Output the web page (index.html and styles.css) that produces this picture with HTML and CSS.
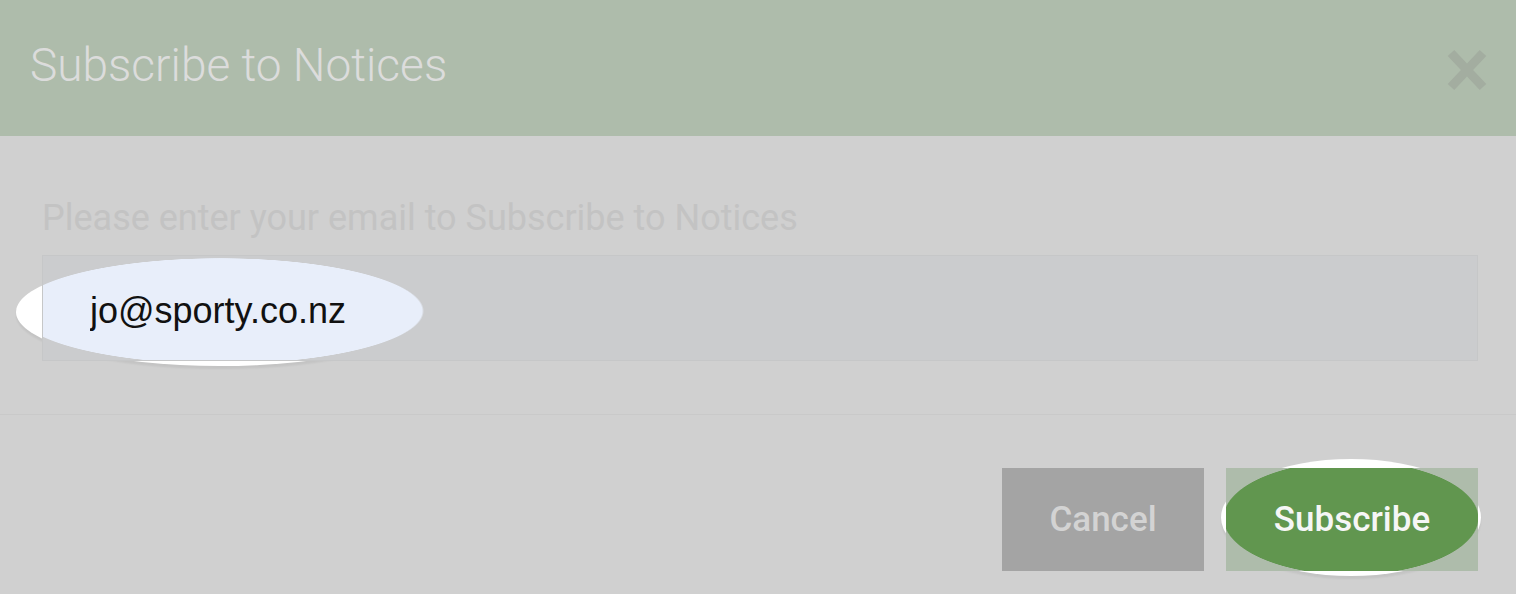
FILE: index.html
```html
<!DOCTYPE html>
<html lang="en">

<head>
    <meta charset="UTF-8">
    <title>Subscribe to Notices</title>
    <link rel="stylesheet" href="styles.css">
</head>

<body>
    <div class="modal">
        <div class="modal-head">
            <h2 class="modal-title">Subscribe to Notices</h2>
            <button class="close" type="button" aria-label="Close">
                <svg width="42" height="44" viewBox="0 0 42 44">
                    <path d="M5 5 L37 39 M37 5 L5 39" stroke="#a3ada0" stroke-width="9" fill="none"/>
                </svg>
            </button>
        </div>

        <div class="modal-body">
            <label class="lbl" for="email">Please enter your email to Subscribe to Notices</label>
            <div class="field">
                <span class="spot spot-field"></span>
                <input class="email" id="email" type="text" value="jo@sporty.co.nz">
            </div>
        </div>

        <div class="modal-foot">
            <button class="btn btn-cancel" type="button">Cancel</button>
            <div class="btn-wrap">
                <span class="spot spot-btn"></span>
                <button class="btn btn-sub" type="button">Subscribe</button>
            </div>
        </div>
    </div>
</body>

</html>
```

FILE: styles.css
```css
/* 기본 */
body {
    margin: 0;
    background: #d0d0d0;
    font-family: Roboto, "Liberation Sans", sans-serif;
}

/* 모달 전체 */
.modal {
    background: #d0d0d0;
    height: 594px;
    overflow: hidden;
}

/* 헤더 */
.modal-head {
    height: 136px;
    background: #aebcab;
    display: flex;
    align-items: center;
    justify-content: space-between;
    padding: 0 28px 0 30px;
    box-sizing: border-box;
}

.modal-title {
    margin: 0;
    font-size: 46px;
    font-weight: 300;
    color: #dcdcdc;
    padding-bottom: 6px;
}

.close {
    border: 0;
    background: none;
    padding: 0;
    margin-top: 4px;
    display: flex;
}

/* 본문 */
.modal-body {
    padding: 62px 38px 53px 42px;
    border-bottom: 1px solid #c9c9c9;
}

.lbl {
    display: block;
    font-size: 36px;
    color: #c3c3c3;
    line-height: 40px;
    margin-bottom: 17px;
}

.field {
    position: relative;
    height: 106px;
}

.email {
    position: relative;
    z-index: 1;
    display: block;
    width: 100%;
    height: 106px;
    box-sizing: border-box;
    border: 1px solid #c6c7c8;
    padding: 5px 0 0 47px;
    margin: 0;
    font-family: "Liberation Sans", Arial, sans-serif;
    font-size: 36px;
    color: #111;
    background: radial-gradient(ellipse 204px 53px at 177px 55px, #e8eefa 99%, #cbccce 100%);
    outline: none;
}

/* 하이라이트 타원 (위에 덮는 표시) */
.spot {
    position: absolute;
    background: #fff;
    border-radius: 50%;
    box-shadow: 0 3px 2px rgba(0, 0, 0, 0.06);
}

.spot-field {
    left: -26px;
    top: 3px;
    width: 408px;
    height: 108px;
}

.spot-btn {
    left: -5px;
    top: -9px;
    width: 260px;
    height: 117px;
}

/* 푸터 버튼 */
.modal-foot {
    display: flex;
    justify-content: flex-end;
    gap: 22px;
    padding: 53px 38px 0 0;
}

.btn {
    border: 0;
    margin: 0;
    padding: 0;
    font-family: Roboto, "Liberation Sans", sans-serif;
    font-size: 35px;
    font-weight: 500;
    height: 103px;
    cursor: pointer;
}

.btn-cancel {
    width: 202px;
    background: #a4a4a4;
    color: #d3d3d3;
}

.btn-wrap {
    position: relative;
}

.btn-sub {
    position: relative;
    z-index: 1;
    width: 252px;
    color: #f6f6f6;
    background: radial-gradient(ellipse 128px 57px at 125px 50px, #61964f 99%, #aebcab 100%);
}
```
